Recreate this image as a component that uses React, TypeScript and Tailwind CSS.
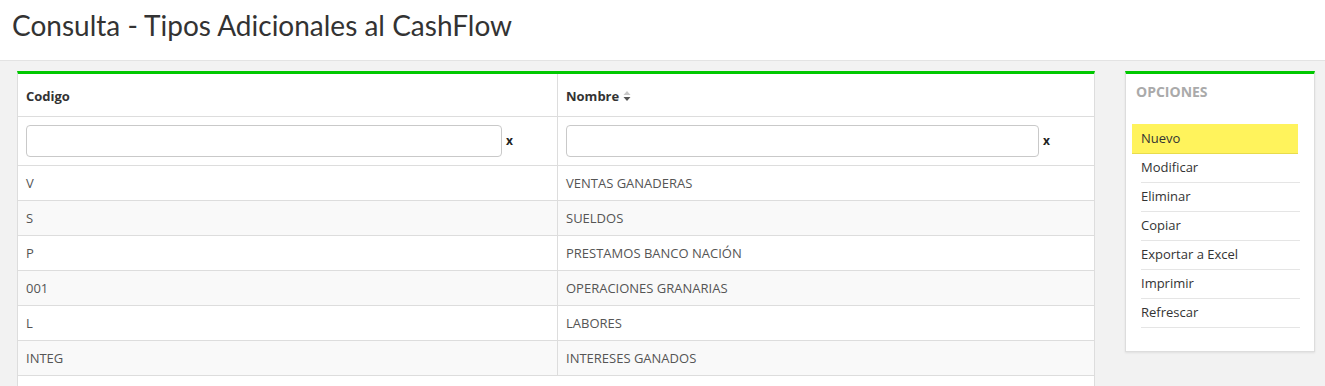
const rows = [
  { codigo: "V", nombre: "VENTAS GANADERAS" },
  { codigo: "S", nombre: "SUELDOS" },
  { codigo: "P", nombre: "PRESTAMOS BANCO NACIÓN" },
  { codigo: "001", nombre: "OPERACIONES GRANARIAS" },
  { codigo: "L", nombre: "LABORES" },
  { codigo: "INTEG", nombre: "INTERESES GANADOS" },
];

const opciones = ["Nuevo", "Modificar", "Eliminar", "Copiar", "Exportar a Excel", "Imprimir", "Refrescar"];

function SortIcon() {
  return (
    <svg width="8" height="11" viewBox="0 0 8 11" className="ml-[4px] inline-block">
      <path d="M4 0 L7.5 4 L0.5 4 Z" fill="#c8c8c8" />
      <path d="M0.5 6 L7.5 6 L4 10 Z" fill="#555" />
    </svg>
  );
}

function FilterCell() {
  return (
    <div className="flex items-center pl-[8px] pr-[43px] h-[49px] border-b border-[#ddd]">
      <input type="text" className="h-[32px] flex-1 border border-[#c9c9c9] rounded-[4px] bg-white" />
      <span className="ml-[4px] w-[8px] text-[12px] font-bold text-[#222]">x</span>
    </div>
  );
}

export default function App() {
  return (
    <div className="w-[1325px] h-[386px] overflow-hidden bg-[#f2f2f2] font-['Open_Sans',sans-serif]">
      <div className="h-[61px] bg-white border-b border-[#e3e3e3] pl-[12px] pt-[7px]">
        <h1 className="font-['Lato',sans-serif] text-[28px] text-[#333] leading-[36px]">
          Consulta - Tipos Adicionales al CashFlow
        </h1>
      </div>

      <div className="flex items-start pl-[17px] pr-[10px] pt-[10px] gap-[30px]">
        {/* tabla */}
        <div className="flex-1 bg-white border-t-[3px] border-[#00c800] border-x border-x-[#ddd] pb-[40px]">
          <div className="grid grid-cols-[540px_1fr]">
            <div className="h-[43px] flex items-center pl-[8px] pt-[3px] text-[13px] font-bold text-[#333] border-b border-r border-[#ddd]">
              Codigo
            </div>
            <div className="h-[43px] flex items-center pl-[8px] pt-[3px] text-[13px] font-bold text-[#333] border-b border-[#ddd]">
              Nombre
              <SortIcon />
            </div>
            <div className="border-r border-[#ddd]">
              <FilterCell />
            </div>
            <FilterCell />
            {rows.map((r, i) => (
              <div key={r.codigo} className="contents">
                <div
                  className={`h-[35px] flex items-center pl-[8px] pt-[1px] text-[13px] text-[#555] border-b border-r border-[#ddd] ${
                    i % 2 === 1 ? "bg-[#f9f9f9]" : "bg-white"
                  }`}
                >
                  {r.codigo}
                </div>
                <div
                  className={`h-[35px] flex items-center pl-[8px] pt-[1px] text-[13px] text-[#555] border-b border-[#ddd] ${
                    i % 2 === 1 ? "bg-[#f9f9f9]" : "bg-white"
                  }`}
                >
                  {r.nombre}
                </div>
              </div>
            ))}
          </div>
        </div>

        {/* opciones */}
        <div className="w-[190px] bg-white border-t-[3px] border-[#00c800] border-x border-b border-x-[#ddd] border-b-[#ddd] shadow-[0_1px_2px_rgba(0,0,0,0.08)] pt-[9px] pb-[23px]">
          <div className="pl-[10px] text-[14px] font-bold text-[#aaa] leading-[18px]">OPCIONES</div>
          <ul className="mt-[23px] ml-[15px] mr-[14px]">
            {opciones.map((o, i) => (
              <li
                key={o}
                className={`h-[29px] flex items-center text-[13px] text-[#333] border-b border-[#e5e5e5] ${
                  i === 0 ? "bg-[#fff35c] -ml-[9px] pl-[9px] mr-[2px] h-[30px] border-[#e8dc4c]" : ""
                }`}
              >
                {o}
              </li>
            ))}
          </ul>
        </div>
      </div>
    </div>
  );
}
